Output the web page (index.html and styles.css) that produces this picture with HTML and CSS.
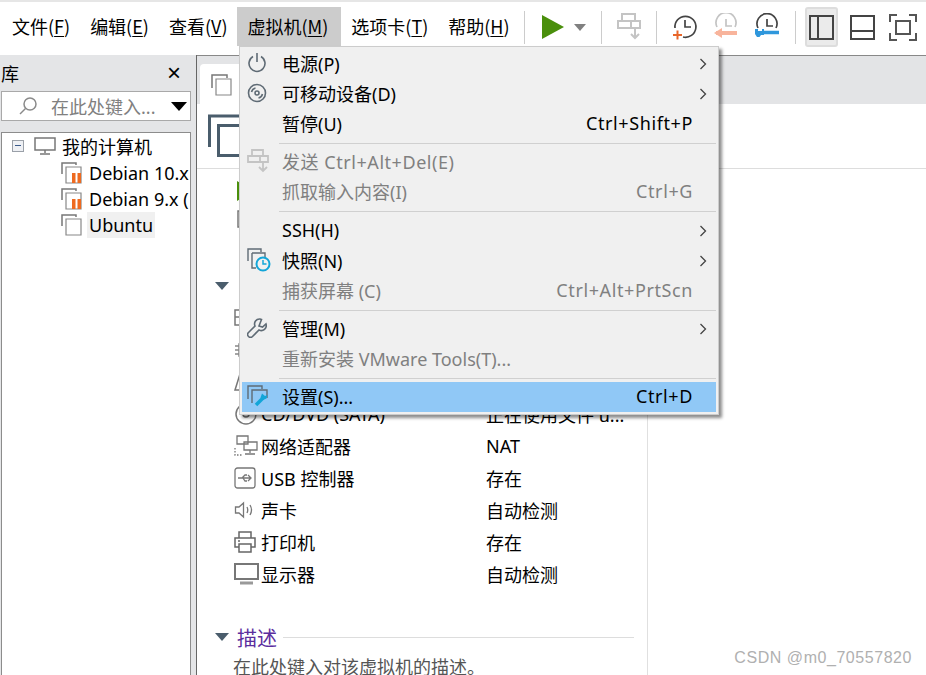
FILE: index.html
```html
<!DOCTYPE html>
<html lang="zh">
<head>
<meta charset="utf-8">
<title>VMware Workstation</title>
<link rel="stylesheet" href="styles.css">
</head>
<body>
<div class="app">
  <header class="topbar">
    <nav class="menubar">
      <span class="mi">文件(<u>F</u>)</span>
      <span class="mi">编辑(<u>E</u>)</span>
      <span class="mi">查看(<u>V</u>)</span>
      <span class="mi mi-open">虚拟机(<u>M</u>)</span>
      <span class="mi">选项卡(<u>T</u>)</span>
      <span class="mi">帮助(<u>H</u>)</span>
    </nav>
    <div class="tools">
      <i class="tsep"></i>
      <svg class="t-play" width="62" height="40" viewBox="0 0 62 40"><path d="M17 8 L39 20 L17 32Z" fill="#4a8f0c"/><path d="M49 17h12l-6 7z" fill="#808080"/></svg>
      <i class="tsep"></i>
      <svg class="t-send" width="24" height="28" viewBox="0 0 24 28" fill="none" stroke="#c4c4c4" stroke-width="2"><path d="M5 1h13v7H5zM1 8h22v7H1zM14 8v7M18 15v10M14 21l4 4 4-4"/></svg>
      <i class="tsep"></i>
      <svg class="t-clock" width="26" height="28" viewBox="0 0 26 28" fill="none"><path d="M3 15A10.500 10.500 0 1 1 11 24" stroke="#444" stroke-width="1.700"/><path d="M13 7v7h6" stroke="#444" stroke-width="1.700"/><path d="M1 22h9M5.500 17.500v9" stroke="#e8662a" stroke-width="2"/></svg>
      <svg class="t-clock" width="26" height="28" viewBox="0 0 26 28" fill="none"><path d="M4 14A10 10 0 1 1 22 14" stroke="#c4c4c4" stroke-width="1.700"/><path d="M13 6v7h6" stroke="#c4c4c4" stroke-width="1.700"/><path d="M3 20h21" stroke="#f8b49c" stroke-width="4"/><path d="M1 20l8-5v10z" fill="#f8b49c"/></svg>
      <svg class="t-clock" width="26" height="28" viewBox="0 0 26 28" fill="none"><path d="M4 15A10 10 0 1 1 22 15" stroke="#444" stroke-width="1.700"/><path d="M13 6v7h6" stroke="#444" stroke-width="1.700"/><path d="M8 19.500h17" stroke="#2f97dc" stroke-width="3.500"/><path d="M1 16h3v2h4v-2h2v6H7l-1.500 2H3l-2-3z" fill="#2f97dc"/></svg>
      <i class="tsep"></i>
      <span class="tbtn tbtn-on"><svg width="25" height="25" viewBox="0 0 25 25" fill="none" stroke="#444" stroke-width="2"><rect x="1" y="1" width="23" height="23"/><path d="M9 1v23"/></svg></span>
      <span class="tbtn"><svg width="25" height="25" viewBox="0 0 25 25" fill="none" stroke="#444" stroke-width="2"><rect x="1" y="1" width="23" height="23"/><path d="M1 16h23"/></svg></span>
      <span class="tbtn"><svg width="28" height="27" viewBox="0 0 28 27" fill="none" stroke="#555" stroke-width="2"><path d="M1 8V1h7M20 1h7v7M27 19v7h-7M8 26H1v-7"/><rect x="7" y="7" width="14" height="13"/></svg></span>
    </div>
  </header>

  <div class="body">
    <aside class="library">
      <div class="lib-head"><span>库</span><span class="lib-close">×</span></div>
      <div class="search">
        <svg width="20" height="20" viewBox="0 0 20 20" fill="none" stroke="#8a8a8a" stroke-width="1.500"><circle cx="12" cy="8" r="6"/><path d="M7.500 12.500L2 18"/></svg>
        <span class="search-text">在此处键入...</span>
        <i class="search-caret"></i>
      </div>
      <div class="tree">
        <div class="tree-row tree-root">
          <i class="expander"></i>
          <svg width="22" height="20" viewBox="0 0 22 20" fill="none" stroke="#777" stroke-width="1.500"><rect x="1" y="2" width="20" height="12"/><path d="M11 14v3M6 18h10"/></svg>
          <span class="tree-label">我的计算机</span>
        </div>
        <div class="tree-row tree-vm">
          <svg width="22" height="22" viewBox="0 0 22 22" fill="none"><path d="M1 12V1h14v2" stroke="#777" stroke-width="1.500"/><path d="M5 5h15v16H5z" stroke="#888" stroke-width="1.200"/><path d="M11 11h3.500v10H11zM16.500 11H20v10h-3.500z" fill="#ee6a20"/></svg>
          <span class="tree-label">Debian 10.x</span>
        </div>
        <div class="tree-row tree-vm">
          <svg width="22" height="22" viewBox="0 0 22 22" fill="none"><path d="M1 12V1h14v2" stroke="#777" stroke-width="1.500"/><path d="M5 5h15v16H5z" stroke="#888" stroke-width="1.200"/><path d="M11 11h3.500v10H11zM16.500 11H20v10h-3.500z" fill="#ee6a20"/></svg>
          <span class="tree-label">Debian 9.x (</span>
        </div>
        <div class="tree-row tree-vm">
          <svg width="22" height="22" viewBox="0 0 22 22" fill="none"><path d="M1 12V1h14v2" stroke="#777" stroke-width="1.500"/><path d="M5 5h15v16H5z" stroke="#888" stroke-width="1.200"/></svg>
          <span class="tree-label tree-sel">Ubuntu</span>
        </div>
      </div>
    </aside>

    <main class="main">
      <div class="tabstrip">
        <div class="tab">
          <svg width="22" height="22" viewBox="0 0 22 22" fill="none"><path d="M1 14V1h15v3" stroke="#777" stroke-width="1.500"/><path d="M5 5h15v16H5z" stroke="#888" stroke-width="1.200"/></svg>
        </div>
      </div>
      <div class="vm-head">
        <svg width="42" height="44" viewBox="0 0 42 44" fill="none" stroke="#4a5d6c" stroke-width="3"><path d="M1.500 33V2h32v7.500"/><path d="M10.500 11.500h30v30h-30z"/></svg>
      </div>
      <div class="columns">
        <section class="details">
          <div class="actions">
            <div class="action"><svg width="16" height="20" viewBox="0 0 16 20"><path d="M0 0l16 10L0 20z" fill="#4a8f0c"/></svg></div>
            <div class="action"><svg width="18" height="18" viewBox="0 0 18 18" fill="none" stroke="#777" stroke-width="1.500"><rect x="1" y="1" width="16" height="16"/></svg></div>
          </div>
          <div class="sec-head"><i class="sec-caret"></i></div>
          <div class="dev"><span class="dev-ic"><svg width="22" height="18" viewBox="0 0 22 18" fill="none" stroke="#777" stroke-width="1.500"><rect x="1" y="1" width="20" height="15"/><path d="M1 8h20M8 1v7"/></svg></span></div>
          <div class="dev"><span class="dev-ic"><svg width="22" height="20" viewBox="0 0 22 20" fill="none" stroke="#888" stroke-width="1.500"><rect x="5" y="4" width="12" height="12"/><path d="M1 6h4M1 10h4M1 14h4"/></svg></span></div>
          <div class="dev"><span class="dev-ic"><svg width="22" height="22" viewBox="0 0 22 22" fill="none" stroke="#777" stroke-width="1.500"><path d="M1 19L6 3h10l5 16zM1 19h20"/></svg></span></div>
          <div class="dev"><span class="dev-ic"><svg width="24" height="24" viewBox="0 0 24 24" fill="none" stroke="#777" stroke-width="1.500"><circle cx="12" cy="12" r="10"/><circle cx="12" cy="12" r="3"/></svg></span><span class="dev-name">CD/DVD (SATA)</span><span>正在使用文件 u...</span></div>
          <div class="dev"><span class="dev-ic"><svg width="24" height="22" viewBox="0 0 24 22" fill="none" stroke="#777" stroke-width="1.300"><path d="M3 1h11v8H3zM10 7h13v8H10zM16 15v3M11 19h10"/><path d="M1 13v7h8" stroke-dasharray="1.500 1.500"/></svg></span><span class="dev-name">网络适配器</span><span>NAT</span></div>
          <div class="dev"><span class="dev-ic"><svg width="22" height="22" viewBox="0 0 22 22" fill="none" stroke="#777" stroke-width="1.300"><rect x="1" y="1" width="20" height="20" rx="2.500"/><path d="M4 11h13M14 8l3 3-3 3M8 11l3-3h2M9 11l2 3h2"/></svg></span><span class="dev-name">USB 控制器</span><span>存在</span></div>
          <div class="dev"><span class="dev-ic"><svg width="20" height="20" viewBox="0 0 20 20" fill="none" stroke="#777" stroke-width="1.300"><path d="M1.500 7v6h3.500l4.500 4V3L5 7zM13 7q1.500 3 0 6M16 5q3 5 0 10"/></svg></span><span class="dev-name">声卡</span><span>自动检测</span></div>
          <div class="dev"><span class="dev-ic"><svg width="22" height="22" viewBox="0 0 22 22" fill="none" stroke="#666" stroke-width="1.500"><path d="M5 7V1h12v6M5 16H1V7h20v9h-4M5 13h12v8H5zM4 10h2"/></svg></span><span class="dev-name">打印机</span><span>存在</span></div>
          <div class="dev"><span class="dev-ic"><svg width="25" height="22" viewBox="0 0 25 22" fill="none" stroke="#777" stroke-width="2"><rect x="1" y="1" width="23" height="15"/><path d="M6 20h13" stroke-width="3" stroke="#999"/></svg></span><span class="dev-name">显示器</span><span>自动检测</span></div>
          <div class="sec-head sec-desc"><i class="sec-caret"></i><span class="sec-title">描述</span><i class="sec-line"></i></div>
          <p class="desc">在此处键入对该虚拟机的描述。</p>
        </section>
        <section class="side"></section>
      </div>
    </main>
  </div>

  <div class="menu">
    <div class="row"><span class="ric"><svg width="20" height="20" viewBox="0 0 20 20" fill="none" stroke="#5f6b75" stroke-width="1.600"><path d="M6 3.500a8 8 0 1 0 8 0M10 0v9"/></svg></span><span class="rlabel">电源(P)</span><svg class="arrow" width="8" height="12" viewBox="0 0 8 12" fill="none" stroke="#444" stroke-width="1.300"><path d="M1.500 1l5 5-5 5"/></svg></div>
    <div class="row"><span class="ric"><svg width="20" height="20" viewBox="0 0 20 20" fill="none" stroke="#5f6b75" stroke-width="1.600"><circle cx="10" cy="10" r="8.500"/><circle cx="10" cy="10" r="2"/><path d="M4.500 9a5.500 5.500 0 0 1 4-4M15.500 11a5.500 5.500 0 0 1-4 4"/></svg></span><span class="rlabel">可移动设备(D)</span><svg class="arrow" width="8" height="12" viewBox="0 0 8 12" fill="none" stroke="#444" stroke-width="1.300"><path d="M1.500 1l5 5-5 5"/></svg></div>
    <div class="row"><span class="ric"></span><span class="rlabel">暂停(U)</span><span class="short">Ctrl+Shift+P</span></div>
    <hr class="msep">
    <div class="row off"><span class="ric"><svg width="22" height="24" viewBox="0 0 22 24" fill="none" stroke="#c4c4c4" stroke-width="1.800"><path d="M5 1h11v6H5zM1 7h20v6H1zM13 7v6M16 13v9M12 18l4 4 4-4"/></svg></span><span class="rlabel rlabel-keys">发送 Ctrl+Alt+Del(E)</span></div>
    <div class="row off"><span class="ric"></span><span class="rlabel">抓取输入内容(I)</span><span class="short">Ctrl+G</span></div>
    <hr class="msep">
    <div class="row row-ssh"><span class="ric"></span><span class="rlabel">SSH(H)</span><svg class="arrow" width="8" height="12" viewBox="0 0 8 12" fill="none" stroke="#444" stroke-width="1.300"><path d="M1.500 1l5 5-5 5"/></svg></div>
    <div class="row"><span class="ric"><svg width="24" height="24" viewBox="0 0 24 24" fill="none"><path d="M1 13V1h13v3" stroke="#5f6b75" stroke-width="1.400"/><path d="M5 5h13v4M5 5v15h4" stroke="#5f6b75" stroke-width="1.400"/><circle cx="16" cy="16" r="6.500" stroke="#12a5d8" stroke-width="2"/><path d="M16 12v4h3.500" stroke="#12a5d8" stroke-width="1.500"/></svg></span><span class="rlabel">快照(N)</span><svg class="arrow" width="8" height="12" viewBox="0 0 8 12" fill="none" stroke="#444" stroke-width="1.300"><path d="M1.500 1l5 5-5 5"/></svg></div>
    <div class="row off"><span class="ric"></span><span class="rlabel">捕获屏幕 (C)</span><span class="short">Ctrl+Alt+PrtScn</span></div>
    <hr class="msep">
    <div class="row"><span class="ric"><svg width="20" height="20" viewBox="0 0 20 20" fill="none" stroke="#5f6b75" stroke-width="1.600"><path d="M13 1a5 5 0 0 0-5 7L1.500 14.500a2.500 2.500 0 0 0 4 4L12 12a5 5 0 0 0 7-6l-3.500 3L12 8l2.500-6.500z"/></svg></span><span class="rlabel">管理(M)</span><svg class="arrow" width="8" height="12" viewBox="0 0 8 12" fill="none" stroke="#444" stroke-width="1.300"><path d="M1.500 1l5 5-5 5"/></svg></div>
    <div class="row off"><span class="ric"></span><span class="rlabel">重新安装 VMware Tools(T)...</span></div>
    <hr class="msep">
    <div class="row hot"><span class="ric"><svg width="22" height="22" viewBox="0 0 22 22" fill="none"><path d="M1 14V1h14v3" stroke="#5f6b75" stroke-width="1.400"/><path d="M5 18V5h15v8" stroke="#5f6b75" stroke-width="1.400"/><path d="M9 20l7-7" stroke="#12a5d8" stroke-width="3.500"/><path d="M15 8.500l3 2.500 2.500-1-1 3.500-3.500 1.500-2.500-2.500z" fill="#12a5d8"/></svg></span><span class="rlabel">设置(S)...</span><span class="short">Ctrl+D</span></div>
  </div>

  <div class="watermark">CSDN @m0_70557820</div>
</div>
</body>
</html>
```

FILE: styles.css
```css
* { box-sizing: border-box; }
html, body { margin: 0; padding: 0; background: #fff; }
body {
  font-family: "Noto Sans", "Noto Sans CJK SC", sans-serif;
  font-size: 18px;
  color: #000;
}
.app {
  position: relative;
  width: 926px;
  height: 675px;
  overflow: hidden;
  display: flex;
  flex-direction: column;
}
i { display: block; }
svg { display: block; flex: none; }

/* top bar */
.topbar {
  height: 55px;
  flex: none;
  display: flex;
  align-items: flex-start;
  border-top: 2px solid #e6e6e6;
  padding-top: 5px;
  background: #fff;
}
.menubar {
  display: flex;
  padding-left: 2px;
  font-family: "Noto Sans CJK SC", "Noto Sans", sans-serif;
}
.mi {
  height: 39px;
  line-height: 39px;
  padding: 0 10px;
  white-space: nowrap;
}
.mi u { text-underline-offset: 2px; }
.mi-open { background: #ccc; padding-right: 13px; }
.tools {
  display: flex;
  align-items: center;
  height: 40px;
  margin-left: 4px;
}
.tsep { width: 1px; height: 33px; background: #ccc; }
.t-play { margin-right: 14px; }
.t-send { margin: 0 15px; }
.t-clock { margin-left: 15px; }
.t-clock:last-of-type { margin-right: 15px; }
.tbtn {
  width: 33px;
  height: 40px;
  display: flex;
  align-items: center;
  justify-content: center;
  margin-right: 8px;
  border-radius: 3px;
}
.tbtn-on {
  margin-left: 9px;
  background: #ebebeb;
  border: 2px solid #ddd;
}

/* body */
.body { flex: 1; display: flex; min-height: 0; }
.library {
  width: 196px;
  flex: none;
  background: #e4e5e7;
  padding: 0 5px 0 1px;
  display: flex;
  flex-direction: column;
}
.lib-head {
  height: 36px;
  display: flex;
  align-items: center;
  justify-content: space-between;
  padding-right: 10px;
}
.lib-close { font-size: 24px; line-height: 1; font-family: "Liberation Sans", sans-serif; }
.search {
  height: 30px;
  background: #fff;
  border: 1px solid #a9a9a9;
  display: flex;
  align-items: center;
  padding-left: 16px;
  color: #808080;
}
.search-text { margin-left: 13px; flex: 1; white-space: nowrap; }
.search-caret {
  width: 0;
  height: 0;
  border-left: 8px solid transparent;
  border-right: 8px solid transparent;
  border-top: 9px solid #000;
  margin-right: 3px;
}
.tree {
  flex: 1;
  margin-top: 11px;
  background: #fff;
  border: 1px solid #8c8c8c;
  border-bottom: 0;
  overflow: hidden;
}
.tree-row {
  height: 26px;
  display: flex;
  align-items: center;
  white-space: nowrap;
  padding-left: 10px;
}
.tree-root { height: 27px; padding-bottom: 2px; }
.tree-vm { padding-left: 59px; }
.expander {
  position: relative;
  width: 12px;
  height: 12px;
  border: 1px solid #9aa0a8;
  background: #eef0f4;
  margin-right: 10px;
}
.expander::after {
  content: "";
  position: absolute;
  left: 2px;
  right: 2px;
  top: 4px;
  height: 1px;
  background: #3a5a8a;
}
.tree-label { margin-left: 6px; }
.tree-vm .tree-label { margin-left: 4px; padding: 0 2px; }
.tree-sel { background: #f0f0f0; line-height: 26px; }

/* main */
.main {
  flex: 1;
  min-width: 0;
  border-left: 1px solid #666;
  display: flex;
  flex-direction: column;
}
.tabstrip {
  height: 49px;
  flex: none;
  background: #e3e4e6;
  border-top: 1px solid #888;
  padding: 8px 0 0 3px;
  display: flex;
}
.tab {
  width: 300px;
  background: #fff;
  border-radius: 4px 4px 0 0;
  display: flex;
  align-items: flex-start;
  gap: 8px;
  padding: 10px 0 0 11px;
}
.vm-head {
  height: 65px;
  flex: none;
  padding: 10px 0 0 11px;
  border-bottom: 1px solid #ddd;
}
.columns { flex: 1; min-height: 0; display: flex; }
.details {
  width: 451px;
  flex: none;
  border-right: 1px solid #e0e0e0;
  padding-right: 13px;
}
.side { flex: 1; }
.actions { height: 101px; padding: 8px 0 0 37px; }
.action { height: 28px; display: flex; align-items: center; padding-left: 3px; }
.sec-head {
  height: 32px;
  display: flex;
  align-items: center;
  padding-left: 18px;
}
.sec-caret {
  width: 0;
  height: 0;
  border-left: 7px solid transparent;
  border-right: 7px solid transparent;
  border-top: 8px solid #4a5d6c;
  margin-right: 8px;
}
.sec-title { font-size: 20px; color: #5b2d9e; }
.sec-line { flex: 1; height: 1px; background: #ddd; margin-left: 6px; }
.sec-desc { margin-top: 31px; }
.dev {
  height: 32px;
  display: flex;
  align-items: center;
  padding-left: 37px;
  white-space: nowrap;
}
.dev-ic { width: 27px; flex: none; display: flex; }
.dev-name { width: 225px; flex: none; }
.desc {
  margin: 0;
  padding: 1px 0 0 36px;
  line-height: 26px;
  color: #555;
  white-space: nowrap;
}

/* dropdown */
.menu {
  position: absolute;
  left: 239px;
  top: 46px;
  width: 480px;
  height: 369px;
  background: #f0f0f0;
  border: 1px solid #ccc;
  padding: 2px;
  box-shadow: 3px 3px 3px rgba(0, 0, 0, .45);
}
.row {
  height: 30px;
  padding-bottom: 2px;
  display: flex;
  align-items: center;
  white-space: nowrap;
}
.row-ssh { height: 31px; }
.ric { width: 40px; flex: none; padding-left: 5px; display: flex; }
.rlabel { flex: 1; }
.rlabel-keys { letter-spacing: .55px; }
.short { margin-right: 23px; letter-spacing: .6px; }
.arrow { margin: 2px 9px 0 0; }
.off { color: #808080; }
.hot { background: #90c8f6; }
.msep {
  margin: 4px 0 3px 37px;
  border: 0;
  height: 1px;
  background: #d0d0d0;
}

.watermark {
  position: absolute;
  right: 14px;
  bottom: 8px;
  font-family: "Liberation Sans", sans-serif;
  font-size: 16px;
  color: #b0b0b0;
  letter-spacing: .55px;
}
```
